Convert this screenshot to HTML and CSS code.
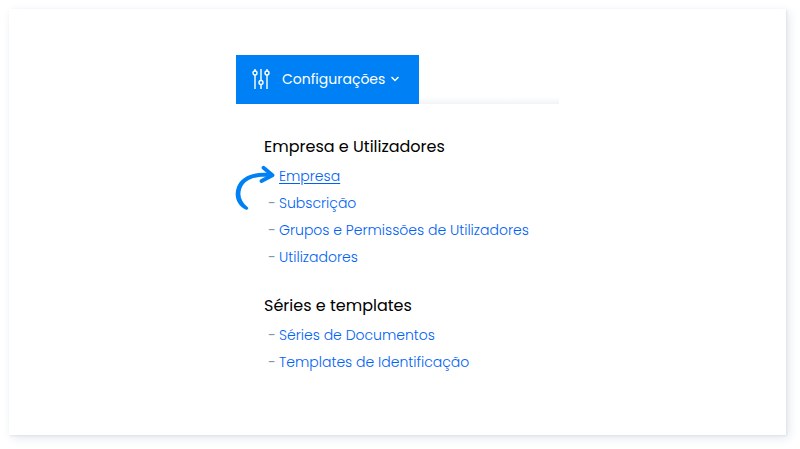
FILE: index.html
```html
<!DOCTYPE html>
<html lang="pt">
<head>
<meta charset="utf-8">
<meta name="viewport" content="width=device-width, initial-scale=1">
<title>Configurações</title>
<link rel="stylesheet" href="styles.css">
</head>
<body>
<main class="card">
  <div class="menu">
    <div class="menu-bar">
      <button class="menu-button" type="button" aria-expanded="true">
        <svg class="sliders" viewBox="0 0 18 22" aria-hidden="true">
          <path d="M3 1v2M3 7v14M9 1v11.500M9 16.500V21M15 1v2M15 7v14"/>
          <circle cx="3" cy="5" r="2"/><circle cx="9" cy="14.500" r="2"/><circle cx="15" cy="5" r="2"/>
        </svg>
        <span>Configurações</span>
        <svg class="chevron" viewBox="0 0 10 6" aria-hidden="true"><path d="M1.500 1L5 4.500 8.500 1"/></svg>
      </button>
      <div class="menu-shade"></div>
    </div>
    <nav class="groups">
      <section>
        <h2>Empresa e Utilizadores</h2>
        <ul>
          <li class="current">
            <svg class="arrow" viewBox="0 0 40 46" aria-hidden="true">
              <path class="arrow-tail" d="M35 8C18 6.500 6 11.500 2 22C-1.500 31 2 40 10.500 44.500C12 45.500 14.500 43.500 12.500 42C6 36.500 3.800 30 6.500 23C10 14.500 19 11 35 12Z"/>
              <path class="arrow-head" d="M28.500 2.800L37.500 10.200 26.500 16"/>
            </svg>
            <a href="#empresa">Empresa</a>
          </li>
          <li><a href="#subscricao">Subscrição</a></li>
          <li><a href="#grupos">Grupos e Permissões de Utilizadores</a></li>
          <li><a href="#utilizadores">Utilizadores</a></li>
        </ul>
      </section>
      <section>
        <h2>Séries e templates</h2>
        <ul>
          <li><a href="#series">Séries de Documentos</a></li>
          <li><a href="#templates">Templates de Identificação</a></li>
        </ul>
      </section>
    </nav>
  </div>
</main>
</body>
</html>
```
FILE: styles.css
```css
* { box-sizing: border-box; }
body {
  margin: 0;
  padding: 9px 14px 14px 9px;
  background: #fff;
  color: #000;
  font-family: Poppins, Inter, "Open Sans", sans-serif;
}
.card {
  display: flex;
  justify-content: center;
  padding: 46px 24px 59px;
  background: #fff;
  box-shadow: 1px 1px 2px #dfe4ea, 3px 3px 10px #e3e8ee;
}
.menu { width: 100%; max-width: 323px; }
.menu-bar { display: flex; align-items: flex-end; }
.menu-button {
  display: flex;
  align-items: center;
  height: 49px;
  padding: 0 19px 2px 16px;
  border: 0;
  background: #0080f5;
  color: #fff;
  font: 400 14px/20px Poppins, Inter, "Open Sans", sans-serif;
}
.sliders { width: 18px; height: 22px; margin-right: 12px; }
.chevron { width: 10px; height: 6px; margin-left: 5px; }
.sliders, .chevron { fill: none; stroke: #fff; stroke-width: 1.4; }
.menu-shade {
  flex: 1;
  height: 7px;
  background: linear-gradient(#fff, #f1f3f6);
}
.groups {
  display: grid;
  gap: 21px;
  padding: 29px 0 0 28px;
}
h2 {
  margin: 0 0 3px;
  font-size: 16px;
  font-weight: 400;
  line-height: 27px;
}
ul { margin: 0; padding: 0; list-style: none; }
li {
  position: relative;
  display: flex;
  padding-left: 4px;
  color: #8195b0;
  font-size: 14px;
  font-weight: 300;
  line-height: 27px;
}
li::before { content: "-"; width: 11px; font-weight: 400; }
.current::before { content: ""; }
a { color: #0062f5; text-decoration: none; white-space: nowrap; }
.current a { text-decoration: underline; text-underline-offset: 2px; }
.arrow {
  position: absolute;
  top: 2px;
  left: -29px;
  width: 40px;
  height: 46px;
}
.arrow-tail { fill: #0080f5; }
.arrow-head {
  fill: none;
  stroke: #0080f5;
  stroke-width: 3.8;
  stroke-linecap: round;
  stroke-linejoin: round;
}
```
